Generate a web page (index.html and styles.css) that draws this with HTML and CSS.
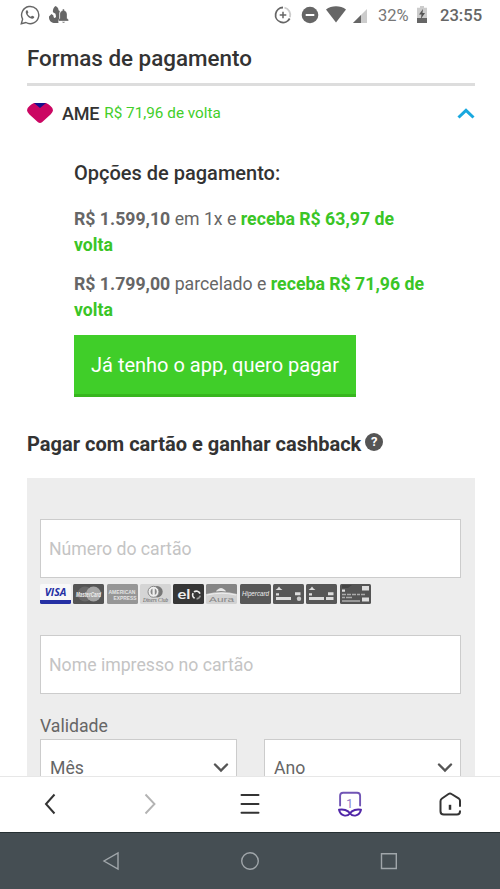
FILE: index.html
```html
<!DOCTYPE html>
<html lang="pt-BR">
<head>
<meta charset="utf-8">
<meta name="viewport" content="width=device-width, initial-scale=1">
<title>Formas de pagamento</title>
<link rel="stylesheet" href="styles.css">
</head>
<body>
<header class="status">
  <svg class="status-whats" width="20" height="20" viewBox="0 0 20 20" fill="none" stroke="#666" stroke-width="1.4"><path d="M1.3 18.7l1.3-4.6A8.6 8.6 0 1 1 5.900 17.500z"/><path d="M6.300 5.500c-1.400 1.600-.2 4.100 1.600 5.900s4.500 3.200 6 1.600c.5-.6.5-1.100 0-1.400l-1.600-.8c-.8-.2-.9.900-1.500.9-1.100-.2-2.900-1.900-3.200-3 0-.5.900-.9.700-1.500l-.7-1.600c-.3-.6-.9-.6-1.300-.1z" fill="#666" stroke="none"/></svg>
  <svg class="status-bell" width="20" height="18" viewBox="0 0 20 18" fill="#666"><path d="M6.500 0C4.500 1.500 3.500 4 4 6.200l2.500 1.600L7 10.500c-.2 1.700-2 1.900-2.400.5l-.2-1.500L2.500 8 0 10.500C-.3 14.500 2.500 17 6 17h3.500l-.2-1.600.9-2.400V8l.6-3-1.300-.7C9.600 2.500 8.500.8 6.500 0z"/><path d="M9.500 15v-1.200l1.300-1.500V8.500c0-2 1.100-3.400 2.700-3.900V3.800c0-1.200 1.800-1.200 1.800 0v.8c1.700.5 2.700 1.900 2.700 3.900v3.800l1.500 1.500V15zM13 15.700h3c-.3 1.600-2.700 1.600-3 0z" stroke="#fff" stroke-width=".3"/></svg>
  <span class="spacer"></span>
  <svg class="status-data" width="18" height="18" viewBox="0 0 18 18" fill="none"><path d="M9 1.500A7.500 7.500 0 1 0 15.700 12.500" stroke="#666" stroke-width="1.800"/><path d="M10.500 1.700a7.500 7.500 0 0 1 5.500 9.500" stroke="#ccc" stroke-width="1.800"/><path d="M9 5.700v6.600M5.700 9h6.600" stroke="#666" stroke-width="1.500"/></svg>
  <svg class="status-dnd" width="18" height="18" viewBox="0 0 18 18"><circle cx="9" cy="9" r="8.300" fill="#666"/><path d="M4.700 9h8.600" stroke="#fff" stroke-width="2"/></svg>
  <svg class="status-wifi" width="20" height="17" viewBox="0 0 20 17"><path d="M0 3.500C5.500-.8 14.500-.8 20 3.500L10 16.500z" fill="#666"/></svg>
  <svg class="status-cell" width="14" height="14" viewBox="0 0 14 14"><path d="M0 14L14 0v14z" fill="#ccc"/><path d="M0 14l8-8v8z" fill="#666"/></svg>
  <span class="percent">32%</span>
  <svg class="status-battery" width="10" height="17" viewBox="0 0 10 17"><path d="M0 1.700h3V0h4v1.700h3V12H0z" fill="#ccc"/><path d="M0 12h10v5H0z" fill="#666"/><path d="M6 3L2 8.500h2.500L3.800 13 8 7H5.500z" fill="#555"/></svg>
  <span class="clock">23:55</span>
</header>

<main class="page">
  <h1 class="title">Formas de pagamento</h1>
  <div class="ame-row">
    <svg width="26" height="20" viewBox="0 0 26 20"><path d="M7 0h12q2.500 1 4.500 3Q26 5 26 7.200q-.2 2-2.200 4L15 19.300q-2 1.400-4 0L2.200 11.200Q.2 9.200 0 7.200 0 5 2.500 3 4.500 1 7 0z" fill="#cb0763"/><path d="M7 0h12L13 5z" fill="#16108c"/></svg>
    <span class="ame-name">AME</span>
    <span class="ame-back">R$ 71,96 de volta</span>
    <span class="spacer"></span>
    <svg width="18" height="12" viewBox="0 0 18 12"><path d="M1.500 10.500L9 3.300l7.500 7.200" fill="none" stroke="#18a8df" stroke-width="3"/></svg>
  </div>

  <section class="options">
    <h2 class="options-title">Opções de pagamento:</h2>
    <p class="option"><b>R$ 1.599,10</b> em 1x e <b class="green">receba R$ 63,97 de<br>volta</b></p>
    <p class="option"><b>R$ 1.799,00</b> parcelado e <b class="green">receba R$ 71,96 de<br>volta</b></p>
    <button class="pay" type="button"><span>Já tenho o app, quero pagar</span></button>
  </section>

  <h2 class="card-title"><span class="card-title-text">Pagar com cartão e ganhar cashback</span><span class="help">?</span></h2>

  <form class="card-form">
    <div class="field"><span class="hint-number">Número do cartão</span></div>
    <div class="brands">
      <svg viewBox="0 0 31 20"><rect width="31" height="20" rx="1.500" fill="#f8f8f8"/><path d="M0 16h31v2.500q0 1.500-1.500 1.500h-28Q0 20 0 18.500z" fill="#2530a4"/><text x="15.500" y="11.800" class="visa">VISA</text></svg>
      <svg viewBox="0 0 31 20"><rect width="31" height="20" rx="1.500" fill="#555"/><circle cx="12" cy="10" r="7.500" fill="#6a6a6a"/><circle cx="20.500" cy="10" r="7.500" fill="#a5a5a5"/><text x="15.500" y="12.500" class="master" textLength="25" lengthAdjust="spacingAndGlyphs">MasterCard</text></svg>
      <svg viewBox="0 0 31 20"><rect width="31" height="20" rx="1.500" fill="#969696"/><text x="15" y="9.500" class="amex" textLength="27" lengthAdjust="spacingAndGlyphs">AMERICAN</text><text x="18" y="15.500" class="amex" textLength="23" lengthAdjust="spacingAndGlyphs">EXPRESS</text></svg>
      <svg viewBox="0 0 31 20"><rect width="31" height="20" rx="1.500" fill="#d5d5d5"/><circle cx="17" cy="7.800" r="5.700" fill="#777"/><circle cx="13.500" cy="7.800" r="5.500" fill="#eee" stroke="#888"/><path d="M12.500 4.500a3.700 3.700 0 0 0 0 6.600zM14.800 4.500a3.700 3.700 0 0 1 0 6.600z" fill="#888"/><text x="15.500" y="17.500" class="diners" textLength="25" lengthAdjust="spacingAndGlyphs">Diners Club</text></svg>
      <svg viewBox="0 0 31 20"><rect width="31" height="20" rx="1.500" fill="#363636"/><text x="4.500" y="14.600" class="elo" textLength="13" lengthAdjust="spacingAndGlyphs">el</text><path d="M21.600 14.300a3.900 3.900 0 0 1-1.500-5.200" class="elo-ring"/><path d="M21 7.900a3.900 3.900 0 0 1 6 1.700" class="elo-ring"/><path d="M27.200 11.700a3.900 3.900 0 0 1-3.600 3.100" class="elo-ring elo-dim"/></svg>
      <svg viewBox="0 0 31 20"><rect width="31" height="20" rx="1.500" fill="#d2d2d2"/><path d="M0 1.500Q0 0 1.500 0h28Q31 0 31 1.500V10q-15-4-31 0z" fill="#858585"/><path d="M10 7.500q1-2.500 5-3.500 4 1 5 3.500-5-1-10 0z" fill="#e8e8e8"/><path d="M1 11q15-3.500 29 0" stroke="#eee" fill="none"/><text x="15.500" y="17.500" class="aura" textLength="25" lengthAdjust="spacingAndGlyphs">Aura</text></svg>
      <svg viewBox="0 0 31 20"><rect width="31" height="20" rx="1.500" fill="#585858"/><text x="15.500" y="12" class="hiper" textLength="27" lengthAdjust="spacingAndGlyphs">Hipercard</text></svg>
      <svg viewBox="0 0 31 20"><rect width="31" height="20" rx="1.500" fill="#575757"/><path d="M2.500 6l2-1.500L6 2.500l1.500 2 2 1.500zM3 9.300h3v2.200H3zM3 13h15v3H3zM22 8.300h5.500v3H22z" fill="#ddd"/><circle cx="26" cy="14.800" r="2.200" fill="#ccc"/></svg>
      <svg viewBox="0 0 31 20"><rect width="31" height="20" rx="1.500" fill="#575757"/><path d="M2.500 6l2-1.500L6 2.500l1.500 2 2 1.500zM3 9.300h3v2.200H3zM3 13h15v3H3zM22 8.300h5.500v3H22zM20 13h7.500v3H20z" fill="#ddd"/></svg>
      <svg viewBox="0 0 31 20"><rect width="31" height="20" rx="1.500" fill="#555"/><path d="M2 1h10l-4 3H2z" fill="#444"/><path d="M22 2h7v4.500h-7zM2 5.500h3v2.200H2zM22 13.500h7v4h-7z" fill="#ddd"/><path d="M2 10.500h4m1 0h4m1 0h4m1 0h3m1 0h4M2 13.500h3m1 0h6" stroke="#aaa" stroke-width="1.700"/><path d="M2 16h18v2H2z" fill="#999"/></svg>
    </div>
    <div class="field"><span class="hint-name">Nome impresso no cartão</span></div>
    <div class="label">Validade</div>
    <div class="selects">
      <div class="select"><span>Mês</span><svg width="16" height="10" viewBox="0 0 16 10"><path d="M2 1.500l6 6 6-6" fill="none" stroke="#555" stroke-width="2.400" stroke-linecap="round"/></svg></div>
      <div class="select"><span>Ano</span><svg width="16" height="10" viewBox="0 0 16 10"><path d="M2 1.500l6 6 6-6" fill="none" stroke="#555" stroke-width="2.400" stroke-linecap="round"/></svg></div>
    </div>
  </form>
</main>

<nav class="browser-nav">
  <div class="cell"><svg width="24" height="26" viewBox="0 0 24 26"><path d="M16.500 3.500L8 13l8.500 9.500" fill="none" stroke="#333" stroke-width="2"/></svg></div>
  <div class="cell"><svg width="24" height="26" viewBox="0 0 24 26"><path d="M7.500 3.500L16.500 13l-9 9.500" fill="none" stroke="#b3b3b3" stroke-width="1.900"/></svg></div>
  <div class="cell"><svg width="24" height="26" viewBox="0 0 24 26"><path d="M3.500 4h17M3.500 13h17M3.500 21.800h17" fill="none" stroke="#333" stroke-width="2" stroke-linecap="round"/></svg></div>
  <div class="cell"><svg width="26" height="26" viewBox="0 0 26 26" fill="none" stroke="#5026a8" stroke-width="1.900" stroke-linecap="round"><path d="M3.100 14.500V4.700q0-3 3-3h14q3 0 3 3v9.800" stroke="#7155b5"/><path d="M2 18.800c4-.9 9 .2 11 3.500-3 3.800-9.500 3-11-3.500zM24 18.800c-4-.9-9 .2-11 3.500 3 3.800 9.500 3 11-3.500z" stroke-linejoin="round"/><text x="12.500" y="17" class="tab-count">1</text></svg></div>
  <div class="cell"><svg width="24" height="26" viewBox="0 0 24 26" fill="none" stroke="#333" stroke-width="2" stroke-linecap="round" stroke-linejoin="round"><path d="M22 15V9.700q0-1.300-1-2L13.500 3Q12 2 10.500 3L4 7.500q-1.500 1-1.500 2.700v10q0 3.300 3.300 3.300H19q3 0 3-3.300"/><path d="M12 13.800v5" stroke-width="2.500" stroke-linecap="butt"/></svg></div>
</nav>
<footer class="android-nav">
  <svg width="20" height="20" viewBox="0 0 20 20"><path d="M17 2v16L3 10z"/></svg>
  <svg width="20" height="20" viewBox="0 0 20 20"><circle cx="10" cy="10" r="8.300"/></svg>
  <svg width="20" height="20" viewBox="0 0 20 20"><path d="M2.500 2.800h14.800v14.700H2.500z"/></svg>
</footer>
</body>
</html>
```
FILE: styles.css
```css
* { box-sizing: border-box; }
body {
  margin: 0;
  width: 500px;
  height: 889px;
  overflow: hidden;
  display: flex;
  flex-direction: column;
  background: #fff;
  color: #666;
  font-family: Roboto, "Liberation Sans", sans-serif;
  white-space: nowrap;
}
svg { display: block; flex: none; }
h1, h2, p { margin: 0; font-weight: 500; }
.spacer { flex: 1; }

.status {
  flex: none;
  display: flex;
  align-items: center;
  height: 29px;
  padding: 0 18px 0 20px;
}
.status-bell { margin-left: 9px; }
.status-data { margin-right: 1px; }
.status-dnd { margin-left: 8px; }
.status-wifi { margin-left: 7px; }
.status-cell { margin: 2px 0 0 7px; }
.percent { width: 31px; margin: 2px 0 0 11px; font-size: 16.500px; color: #777; }
.status-battery { margin-left: 8px; }
.clock { width: 42px; margin: 2px 0 0 13px; font-size: 16.600px; font-weight: 500; }

.page { flex: 1; min-height: 0; overflow: hidden; padding: 0 25px 0 27px; }
.title {
  height: 57px;
  padding-top: 15px;
  border-bottom: 3px solid #ddd;
  font-size: 22.400px;
  line-height: 28px;
  color: #333;
}
.ame-row { display: flex; align-items: center; height: 54px; }
.ame-name { margin-left: 9px; font-size: 18px; font-weight: 500; letter-spacing: -.2px; color: #333; }
.ame-back { margin-left: 5px; font-size: 15.300px; color: #42ce29; }

.options { padding: 20px 0 0 47px; }
.options-title { font-size: 20px; line-height: 26px; color: #333; }
.option { font-size: 17.700px; font-weight: 400; line-height: 26px; padding-top: 13px; }
.options-title + .option { padding-top: 20px; }
.option b { font-weight: 700; }
.option .green { color: #3ac526; }
.pay {
  display: flex;
  align-items: center;
  justify-content: center;
  width: 282px;
  height: 62px;
  margin: 12px 0 0;
  padding: 1px 0 0;
  border: 0;
  border-bottom: 3px solid #37b61e;
  background: #40ce29;
  color: #fff;
  font: 20px Roboto, sans-serif;
}

.card-title {
  display: flex;
  align-items: center;
  height: 30px;
  margin-top: 32px;
  font-size: 20.060px;
  font-weight: 700;
  color: #333;
}
.help {
  width: 18px;
  height: 18px;
  margin: -5px 0 0 4px;
  border-radius: 50%;
  background: #555;
  color: #fff;
  font-size: 13px;
  line-height: 18px;
  text-align: center;
}

.card-form { margin-top: 19px; padding: 41px 14px 0 13px; height: 400px; background: #ededed; }
.field {
  display: flex;
  align-items: center;
  height: 59px;
  padding-left: 8px;
  border: 1px solid #ccc;
  background: #fff;
  color: #c4c4c4;
  font-size: 17.660px;
}
.brands { display: flex; gap: 2.300px; height: 57px; padding-top: 6px; }
.brands svg { width: 31px; height: 20px; }
.brands text { font-family: "Liberation Sans", sans-serif; text-anchor: middle; fill: #eee; }
.brands .visa { font: italic 700 10.500px "Open Sans", sans-serif; fill: #2530a4; }
.brands .master { font-size: 6.500px; font-style: italic; font-weight: 700; }
.brands .amex { font-size: 6px; font-weight: 700; fill: #e4e4e4; }
.brands .diners { font: italic 5.500px "Liberation Serif", serif; fill: #555; }
.brands .elo { font: 700 14px Lato, sans-serif; text-anchor: start; }
.brands .aura { font-size: 7px; fill: #888; }
.brands .hiper { font-size: 7.500px; font-style: italic; }
.elo-ring { fill: none; stroke: #eee; stroke-width: 1.700; }
.elo-dim { stroke: #999; }
.label { height: 45px; padding-top: 21px; font-size: 17.660px; line-height: 22px; }
.selects { display: grid; grid-template-columns: 197px 197px; justify-content: space-between; }
.select {
  display: flex;
  align-items: center;
  justify-content: space-between;
  height: 58px;
  padding: 0 7px 0 9px;
  border: 1px solid #ccc;
  background: #fff;
  font-size: 17.660px;
}

.browser-nav {
  flex: none;
  display: grid;
  grid-template-columns: repeat(5, 100px);
  height: 57px;
  padding-bottom: 1px;
  border-top: 1px solid #e7e7e7;
  border-bottom: 1px solid #263033;
  background: #fff;
}
.cell { display: flex; align-items: center; justify-content: center; }
.tab-count { font: 12px Roboto, sans-serif; fill: #8c77c5; stroke: none; text-anchor: middle; }
.android-nav {
  flex: none;
  display: flex;
  align-items: center;
  justify-content: space-between;
  height: 56px;
  padding: 0 101px;
  background: #454e53;
}
.android-nav svg { fill: none; stroke: #a0a6aa; stroke-width: 1.400; }
```
